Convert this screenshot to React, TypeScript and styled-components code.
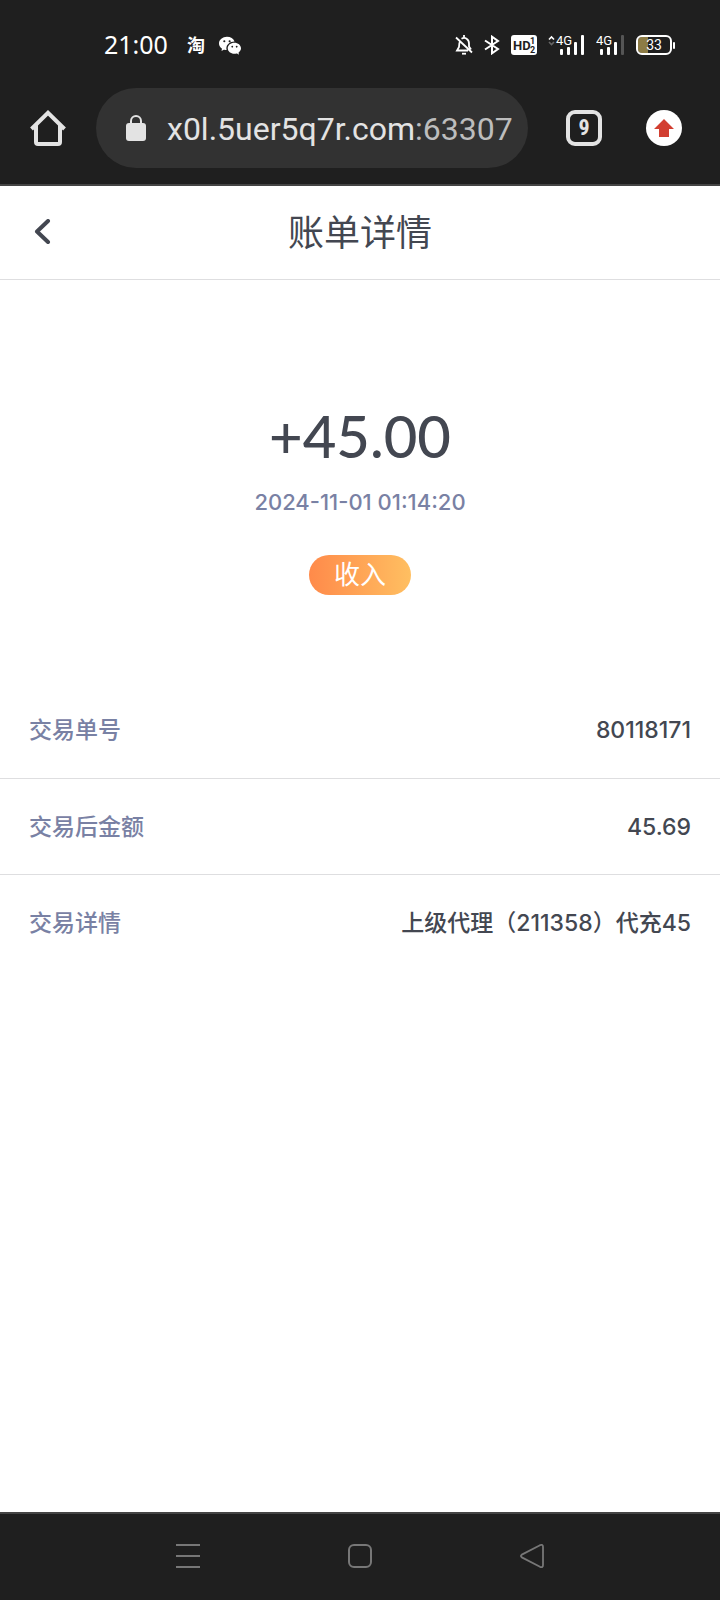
import React from "react";
import styled, { createGlobalStyle } from "styled-components";
import { BsWechat } from "react-icons/bs";

const GlobalStyle = createGlobalStyle`
  * { box-sizing: border-box; }
  body {
    margin: 0;
    background: #fff;
    font-family: Inter, "Noto Sans CJK SC", sans-serif;
  }
  svg { display: block; flex: none; }
`;

const Screen = styled.div`
  display: flex;
  flex-direction: column;
  min-height: 100vh;
`;

const StatusBar = styled.div`
  display: flex;
  align-items: center;
  justify-content: space-between;
  height: 88px;
  padding: 2px 45px 0 104px;
  background: #1f1f1f;
  color: #fff;
`;

const StatusGroup = styled.div<{ $gap: number }>`
  display: flex;
  align-items: center;
  gap: ${(p) => p.$gap}px;
`;

const Clock = styled.time`
  margin-right: 5px;
  padding-bottom: 2px;
  font: 400 25px/32px "Noto Sans", sans-serif;
`;

const AppGlyph = styled.span`
  padding-bottom: 2px;
  font: 700 18px/24px "Noto Sans CJK SC", sans-serif;
`;

const Toolbar = styled.div`
  display: flex;
  align-items: center;
  padding: 0 38px 16px 30px;
  background: #1f1f1f;
  border-bottom: 2px solid #444;
`;

const PlainButton = styled.button`
  display: flex;
  align-items: center;
  justify-content: center;
  flex: none;
  padding: 0;
  border: 0;
  background: none;
  color: inherit;
  cursor: pointer;
`;

const AddressBar = styled(PlainButton)`
  flex: 1;
  justify-content: flex-start;
  gap: 21px;
  min-width: 0;
  height: 80px;
  margin: 0 38px 0 30px;
  padding: 0 16px 0 30px;
  border-radius: 40px;
  background: #323232;
  color: #e3e3e3;
  font: 400 32px/40px Roboto, sans-serif;
`;

const Url = styled.span`
  padding-top: 2px;
  overflow: hidden;
  white-space: nowrap;
`;

const Port = styled.span`
  color: #bdbdbd;
`;

const TabsButton = styled(PlainButton)`
  width: 36px;
  height: 36px;
  margin-right: 44px;
  border: 4px solid #e3e3e3;
  border-radius: 9px;
  color: #e3e3e3;
  font: 700 22px/24px "Roboto Condensed", Roboto, sans-serif;
`;

const UpdateButton = styled(PlainButton)`
  width: 36px;
  height: 36px;
  border-radius: 50%;
  background: #fff;
`;

const PageHeader = styled.header`
  display: grid;
  grid-template-columns: 24px 1fr 24px;
  align-items: center;
  height: 94px;
  padding: 0 30px;
  border-bottom: 1px solid #dedee0;
  color: #434751;
`;

const Title = styled.h1`
  margin: 0;
  text-align: center;
  font-size: 36px;
  line-height: 48px;
  font-weight: 400;
`;

const Main = styled.main`
  flex: 1;
`;

const Summary = styled.section`
  display: flex;
  flex-direction: column;
  align-items: center;
  padding: 120px 30px 87px;
`;

const Amount = styled.strong`
  color: #434751;
  font-family: Lato, sans-serif;
  font-size: 58px;
  line-height: 72px;
  font-weight: 500;
`;

const Timestamp = styled.time`
  margin: 16px 0 39px;
  color: #7981a4;
  font-size: 22px;
  line-height: 28px;
  font-weight: 500;
`;

const Badge = styled.span`
  padding: 0 25px;
  border-radius: 20px;
  background: linear-gradient(90deg, #ff8a4a, #ffbf61);
  color: #fff;
  font-size: 26px;
  line-height: 40px;
`;

const Details = styled.dl`
  margin: 0;
`;

const DetailRow = styled.div`
  display: flex;
  align-items: center;
  justify-content: space-between;
  height: 96px;
  padding: 0 29px;
  font-weight: 500;
  line-height: 32px;

  & + & { border-top: 1px solid #dedee0; }
`;

const Label = styled.dt`
  color: #7981a4;
  font-size: 23px;
`;

const Value = styled.dd`
  margin: 0;
  color: #434751;
  font-size: 23px;
`;

const NavBar = styled.nav`
  display: flex;
  align-items: center;
  justify-content: center;
  gap: 148px;
  height: 88px;
  padding-bottom: 2px;
  border-top: 2px solid #444;
  background: #1f1f1f;
  color: #777;
`;

const MutedBell = () => (
  <svg width="18" height="20" viewBox="0 0 18 20" fill="none" stroke="#fff" strokeWidth="1.8">
    <path d="M1 2.5 17 17.5M5 6.5C4 8 4 10 4 12L2 15.5h11M6.5 3.7C10 1.7 14 4 14 8.5v3l2 3M9 0v2.5" />
    <path d="M7 18.7h4" />
  </svg>
);

const Bluetooth = () => (
  <svg width="16" height="20" viewBox="0 0 16 20" fill="none" stroke="#fff" strokeWidth="2">
    <path d="M1 5.5 14 14 8 18.3V1.7L14 6 1 14.5" />
  </svg>
);

const HdBadge = () => (
  <svg width="26" height="20" viewBox="0 0 26 20" fontWeight="700">
    <rect width="26" height="20" rx="3" fill="#fff" />
    <text x="2" y="15" fontSize="13" fontFamily="Roboto, sans-serif" fill="#1f1f1f">HD</text>
    <text x="19" y="9" fontSize="9" fontFamily="Roboto, sans-serif" fill="#1f1f1f">1</text>
    <text x="19" y="18" fontSize="9" fontFamily="Roboto, sans-serif" fill="#1f1f1f">2</text>
  </svg>
);

const Signal = ({ arrows = false, weak = false }: { arrows?: boolean; weak?: boolean }) => {
  const x = arrows ? 8 : 0;
  return (
    <svg width={29 + x} height="28" viewBox={`0 -4 ${29 + x} 28`} fill="#fff">
      {arrows && (
        <g fill="none" strokeWidth="1.6">
          <path d="M1 4.5 3.5 2 6 4.5" stroke="#fff" />
          <path d="M1 7 3.5 9.5 6 7" stroke="#666" />
        </g>
      )}
      <text x={x} y="10" fontSize="13" fontFamily="Roboto, sans-serif">4G</text>
      <rect x={x + 4} y="14" width="3" height="6" rx="1" />
      <rect x={x + 11} y="12" width="3" height="8" rx="1" />
      <rect x={x + 18} y="7" width="3" height="13" rx="1" />
      <rect x={x + 25} y="0" width="3" height="20" rx="1" fill={weak ? "#555" : "#fff"} />
    </svg>
  );
};

const Battery = () => (
  <svg width="39" height="20" viewBox="0 0 39 20">
    <path d="M6 2h6v16H6a4 4 0 0 1-4-4V6a4 4 0 0 1 4-4z" fill="#8d7c45" />
    <rect x="1" y="1" width="34" height="18" rx="5" fill="none" stroke="#fff" strokeWidth="2" />
    <rect x="37" y="7" width="2" height="7" rx="1" fill="#fff" />
    <text x="18" y="15" textAnchor="middle" fontSize="14" fontFamily="Roboto, sans-serif" fill="#fff">33</text>
  </svg>
);

const HomeIcon = () => (
  <svg width="36" height="36" viewBox="0 0 36 36" fill="none" stroke="#e3e3e3" strokeWidth="4">
    <path d="M1.500 19 18 2.800 34.500 19" />
    <path d="M6 15v17a2 2 0 0 0 2 2h20a2 2 0 0 0 2-2V15" />
  </svg>
);

const LockIcon = () => (
  <svg width="20" height="26" viewBox="0 0 20 26">
    <rect y="8" width="20" height="18" rx="3" fill="#e3e3e3" />
    <path d="M5 9V6a5 5 0 0 1 10 0v3" fill="none" stroke="#e3e3e3" strokeWidth="2" />
  </svg>
);

const details = [
  { label: "交易单号", value: "80118171" },
  { label: "交易后金额", value: "45.69" },
  { label: "交易详情", value: "上级代理（211358）代充45" },
];

export default function App() {
  return (
    <Screen>
      <GlobalStyle />
      <StatusBar>
        <StatusGroup $gap={14}>
          <Clock>21:00</Clock>
          <AppGlyph>淘</AppGlyph>
          <BsWechat size={22} />
        </StatusGroup>
        <StatusGroup $gap={11}>
          <MutedBell />
          <Bluetooth />
          <HdBadge />
          <Signal arrows />
          <Signal weak />
          <Battery />
        </StatusGroup>
      </StatusBar>
      <Toolbar>
        <PlainButton aria-label="主页"><HomeIcon /></PlainButton>
        <AddressBar>
          <LockIcon />
          <Url>x0l.5uer5q7r.com<Port>:63307</Port></Url>
        </AddressBar>
        <TabsButton>9</TabsButton>
        <UpdateButton aria-label="更新">
          <svg width="20" height="18" viewBox="0 0 20 18" fill="#d23f31">
            <path d="M10 0 20 10h-5v8H5v-8H0z" />
          </svg>
        </UpdateButton>
      </Toolbar>
      <PageHeader>
        <PlainButton aria-label="返回">
          <svg width="24" height="28" viewBox="0 0 24 28" fill="none" stroke="currentColor" strokeWidth="4" strokeLinecap="round" strokeLinejoin="round">
            <path d="M18 2 7 12.500 18 23" />
          </svg>
        </PlainButton>
        <Title>账单详情</Title>
      </PageHeader>
      <Main>
        <Summary>
          <Amount>+45.00</Amount>
          <Timestamp>2024-11-01 01:14:20</Timestamp>
          <Badge>收入</Badge>
        </Summary>
        <Details>
          {details.map((d) => (
            <DetailRow key={d.label}>
              <Label>{d.label}</Label>
              <Value>{d.value}</Value>
            </DetailRow>
          ))}
        </Details>
      </Main>
      <NavBar>
        <PlainButton aria-label="最近任务">
          <svg width="24" height="24" viewBox="0 0 24 24" stroke="currentColor" strokeWidth="2">
            <path d="M0 1h24M0 12h24M0 23h24" />
          </svg>
        </PlainButton>
        <PlainButton aria-label="主屏幕">
          <svg width="24" height="24" viewBox="0 0 24 24" fill="none" stroke="currentColor" strokeWidth="2">
            <rect x="1" y="1" width="22" height="22" rx="5" />
          </svg>
        </PlainButton>
        <PlainButton aria-label="后退">
          <svg width="24" height="24" viewBox="0 0 24 24" fill="none" stroke="currentColor" strokeWidth="1.800" strokeLinejoin="round">
            <path d="M1.800 10.600 20 1.200Q23 0 23 3v18q0 3-3 1.800L1.800 13.400Q0 12 1.800 10.600z" />
          </svg>
        </PlainButton>
      </NavBar>
    </Screen>
  );
}
